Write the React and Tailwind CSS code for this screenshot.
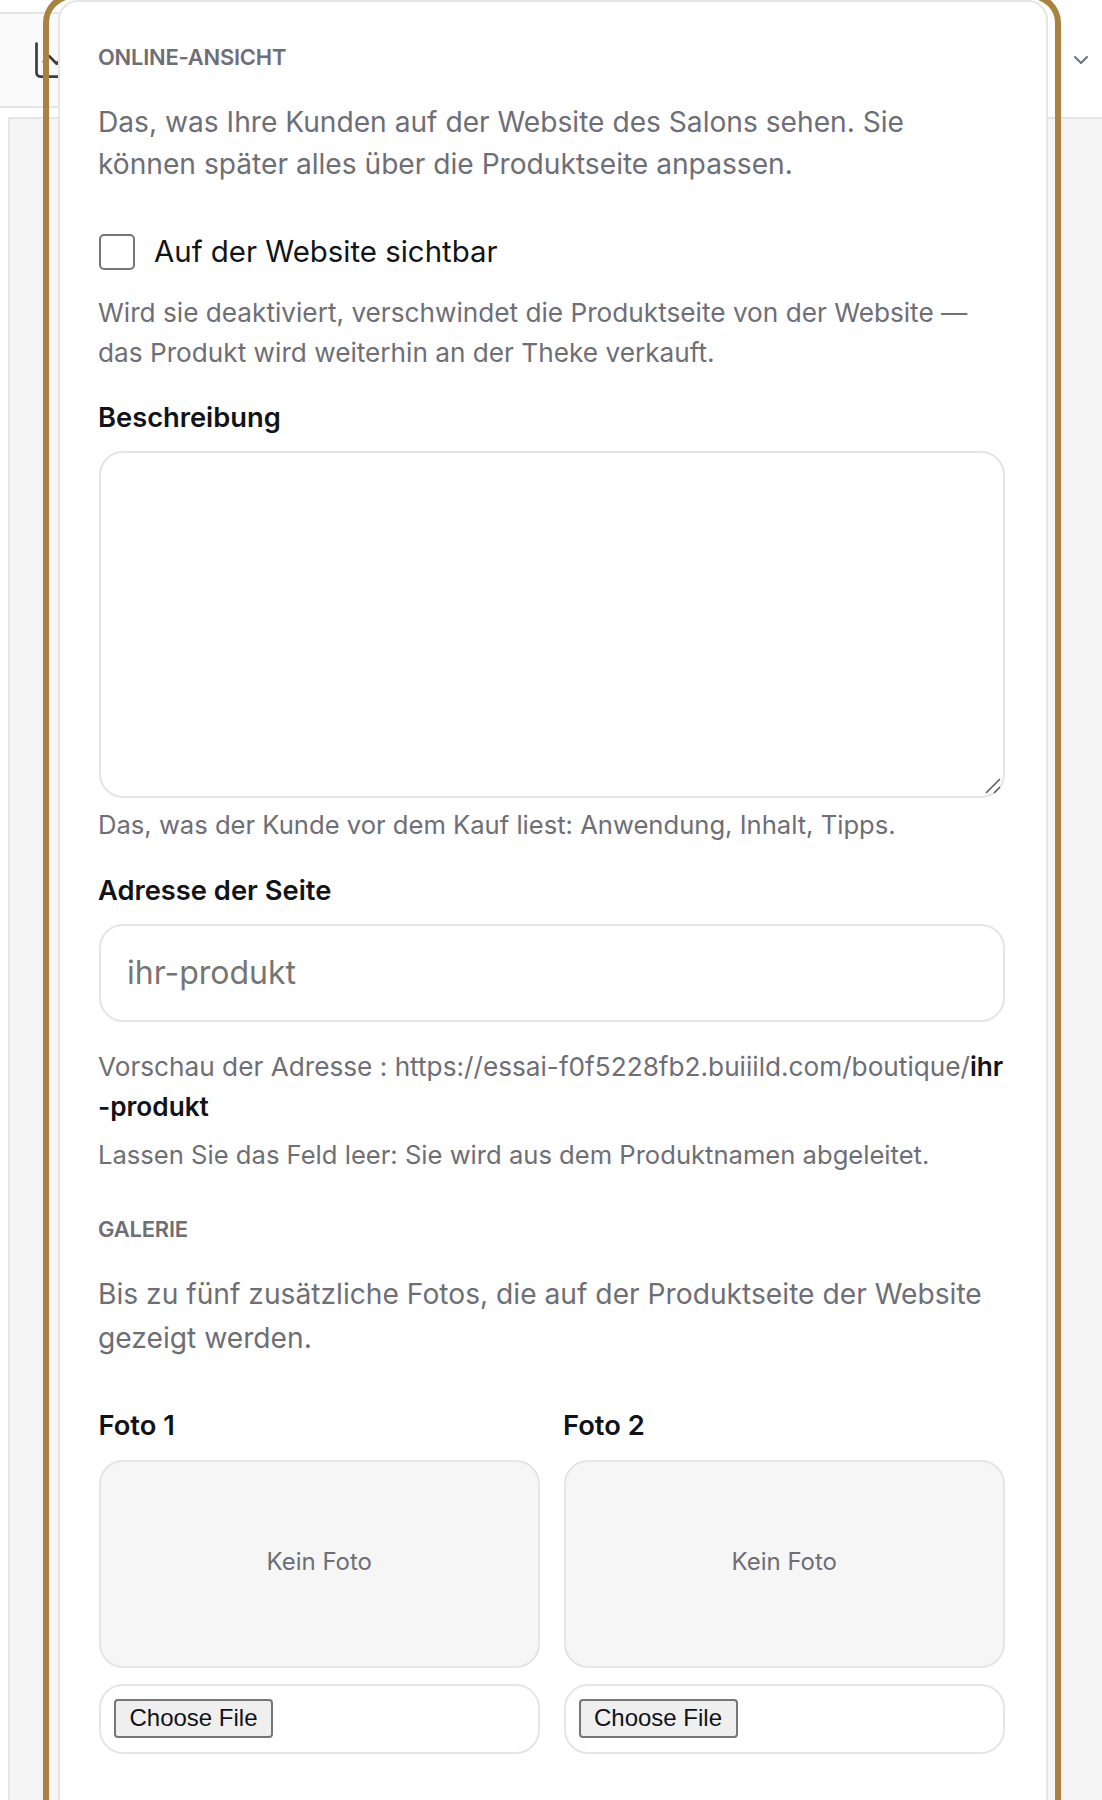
import React from "react";

const Help = ({ className = "", children }) => (
  <p className={`ml-[-1px] text-[#6e6e76] ${className}`}>{children}</p>
);

function FotoSlot({ label }) {
  return (
    <div className="flex flex-col">
      <div className="ml-[-0.5px] text-[27.3px] leading-[42px] font-semibold text-[#111318]">{label}</div>
      <div className="mt-[13px] flex h-[208px] items-center justify-center rounded-[24px] border-2 border-[#e5e5e5] bg-[#f6f6f6] pb-[4px] text-[24px] text-[#6e6e76]">
        Kein Foto
      </div>
      <div className="mt-[16px] flex h-[70px] items-center rounded-[24px] border-2 border-[#e5e5e5] bg-white pb-[2px] pl-[13px]">
        <button
          type="button"
          className="flex h-[39px] w-[159px] items-center justify-center rounded-[4px] border-2 border-[#767676] bg-[#efefef] text-[24px] text-[#111318] [font-family:'Liberation_Sans',Arial,sans-serif]"
        >
          Choose File
        </button>
      </div>
    </div>
  );
}

export default function App() {
  return (
    <div className="relative h-[1800px] w-[1102px] overflow-hidden bg-white [font-family:Inter,'Liberation_Sans',sans-serif]">
      {/* page behind the dialog */}
      <div className="absolute left-0 top-[12px] flex h-[96px] w-[60px] items-center border-y-2 border-[#e5e5e5] bg-[#fafafa]">
        <div className="ml-[3px] h-[40px] w-[2px] bg-[#e5e5e5]" />
        <svg className="ml-[28px] h-[44px] w-[44px] shrink-0" viewBox="0 0 24 24" fill="none" stroke="#3f3f46" strokeWidth="1.5" strokeLinecap="round" strokeLinejoin="round">
          <path d="M3 3v16a2 2 0 0 0 2 2h16" />
          <path d="m19 9-5 5-4-4-3 3" />
        </svg>
      </div>
      <div className="absolute inset-x-0 top-[117px] bottom-0 ml-[8px] border-t-2 border-l-2 border-[#e5e5e5] bg-[#f5f5f5]" />
      <svg className="absolute left-[1069px] top-[48px] h-[24px] w-[24px]" viewBox="0 0 24 24" fill="none" stroke="#6b7280" strokeWidth="2" strokeLinecap="round" strokeLinejoin="round">
        <path d="m6 9 6 6 6-6" />
      </svg>

      {/* gold frame */}
      <div className="absolute left-[43px] top-[-7px] h-[1900px] w-[1018px] rounded-[30px] border-[6px] border-[#a98240]" />

      {/* dialog card */}
      <div className="absolute left-[58px] top-0 h-[1830px] w-[990px] rounded-[20px] border-2 border-[#e5e5e5] bg-white pl-[39px] pt-[39px]">
        <div className="w-[906px]">
          <h2 className="ml-[-1px] text-[21.9px] leading-[33px] font-semibold text-[#6e6e76] tracking-[-0.2px]">ONLINE-ANSICHT</h2>
          <Help className="mt-[27px] text-[28.15px] leading-[42px]">
            Das, was Ihre Kunden auf der Website des Salons sehen. Sie
            <br />
            können später alles über die Produktseite anpassen.
          </Help>

          <label className="mt-[49px] flex items-center">
            <span className="h-[36px] w-[36px] rounded-[5px] border-2 border-[#767676] bg-white" />
            <span className="ml-[19px] mt-[-1px] text-[29.4px] leading-[36px] text-[#111318]">Auf der Website sichtbar</span>
          </label>
          <Help className="mt-[23px] text-[26.2px] leading-[40px]">
            Wird sie deaktiviert, verschwindet die Produktseite von der Website —
            <br />
            das Produkt wird weiterhin an der Theke verkauft.
          </Help>

          <div className="ml-[-1px] mt-[24px] text-[27.3px] leading-[42px] font-semibold text-[#111318]">Beschreibung</div>
          <div className="relative mt-[12px] h-[347px] rounded-[24px] border-2 border-[#e5e5e5] bg-white">
            <svg className="absolute right-[1px] bottom-[1px] h-[18px] w-[18px]" viewBox="0 0 18 18" fill="none" stroke="#5f5f5f" strokeWidth="1.6">
              <path d="M2 16 16 2M10 16l6-6" />
            </svg>
          </div>
          <Help className="mt-[8px] text-[25.6px] leading-[38px]">
            Das, was der Kunde vor dem Kauf liest: Anwendung, Inhalt, Tipps.
          </Help>

          <div className="ml-[-1px] mt-[26px] text-[27.3px] leading-[42px] font-semibold text-[#111318]">Adresse der Seite</div>
          <div className="mt-[12px] flex h-[98px] items-center rounded-[24px] border-2 border-[#e5e5e5] bg-white px-[26px] text-[32px] text-[#757575]">
            ihr-produkt
          </div>
          <div className="ml-[-1px] mt-[25px] whitespace-nowrap text-[26.2px] leading-[40px] text-[#6e6e76]">
            Vorschau der Adresse : https://essai-f0f5228fb2.buiiild.com/boutique/<strong className="font-semibold text-[#111318]">ihr<br />-produkt</strong>
          </div>
          <Help className="mt-[9px] text-[25.6px] leading-[38px]">
            Lassen Sie das Feld leer: Sie wird aus dem Produktnamen abgeleitet.
          </Help>

          <h2 className="ml-[-1px] mt-[39px] text-[22px] leading-[33px] font-semibold text-[#6e6e76] tracking-[-0.2px]">GALERIE</h2>
          <Help className="mt-[26px] text-[28.2px] leading-[44px]">
            Bis zu fünf zusätzliche Fotos, die auf der Produktseite der Website
            <br />
            gezeigt werden.
          </Help>

          <div className="mt-[45px] grid grid-cols-[440.5px_1fr] gap-[24px]">
            <FotoSlot label="Foto 1" />
            <FotoSlot label="Foto 2" />
          </div>
        </div>
      </div>
    </div>
  );
}
